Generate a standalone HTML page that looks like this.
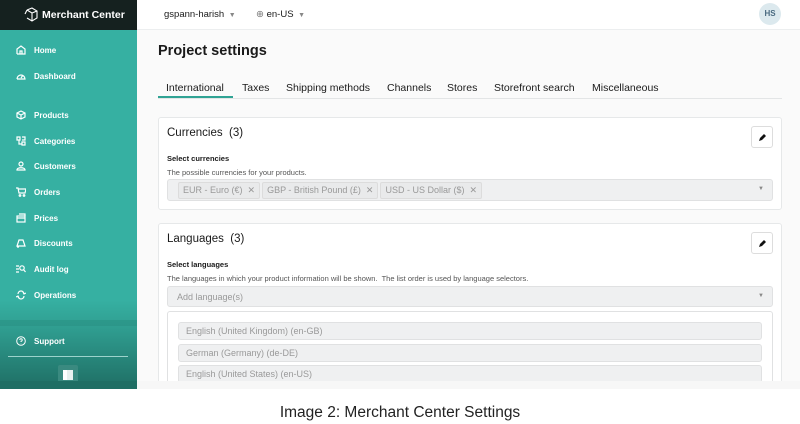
<!DOCTYPE html>
<html><head><meta charset="utf-8"><style>
*{margin:0;padding:0;box-sizing:border-box}
body{width:800px;height:424px;background:#fff;font-family:"Liberation Sans",sans-serif;position:relative;overflow:hidden;color:#1a1a1a}
.abs{position:absolute}
.side{left:0;top:0;width:137px;height:389px;background:linear-gradient(#36b0a2 0,#36b0a2 300px,#2f9c8f 330px,#1f6e64 389px)}
.topdark{left:0;top:0;width:137px;height:30px;background:#15211f;color:#fff;font-size:10.5px;font-weight:bold}
.nav{left:16px;color:#fff;font-size:8px;font-weight:bold;display:flex;align-items:center}
.nav svg{width:10px;height:10px;margin-right:8px}
.main{left:137px;top:0;width:663px;height:389px;background:#fafafa}
.top{left:137px;top:0;width:663px;height:30px;background:#fff;border-bottom:1px solid #eceeef;font-size:9.5px}
.card{left:158px;width:624px;background:#fff;border:1px solid #e6e8e9;border-radius:3px}
.tab{top:82px;font-size:10.5px;color:#1a1a1a}
.edit{width:22px;height:22px;border:1px solid #ddd;border-radius:3px;background:#fff}
.inp{background:#eff0f1;border:1px solid #e0e1e2;border-radius:3px;color:#999;font-size:9px}
.chip{background:#e9eaeb;border:1px solid #dcdcdc;border-radius:2px;height:17px;line-height:15px;padding:0 4px;color:#999;font-size:9px;display:inline-block;margin-right:2px}
</style></head><body>
<div class="abs main"></div>
<div class="abs side"></div>
<div class="abs topdark"><svg class="abs" style="left:24px;top:7px" width="14" height="15" viewBox="0 0 14 15" fill="none" stroke="#fff" stroke-width="1.1"><path d="M3 3L8 1l5 3v7l-5 3-5-3M3 3l5 3 5-2M8 6v8M1 7l2-4"/></svg><span class="abs" style="left:42px;top:9px">Merchant Center</span></div>
<div class="abs nav" style="top:45px"><svg viewBox="0 0 10 10" fill="none" stroke="#fff" stroke-width="1.2"><path d="M1 9V4l4-3 4 3v5H1M4 9V6h2v3"/></svg>Home</div>
<div class="abs nav" style="top:71px"><svg viewBox="0 0 10 10" fill="none" stroke="#fff" stroke-width="1.2"><path d="M1 8a4 4 0 1 1 8 0H1M5 7l2-3"/></svg>Dashboard</div>
<div class="abs nav" style="top:110px"><svg viewBox="0 0 10 10" fill="none" stroke="#fff" stroke-width="1.2"><path d="M5 1l4 2v4L5 9 1 7V3zM1 3l4 2 4-2M5 5v4"/></svg>Products</div>
<div class="abs nav" style="top:136px"><svg viewBox="0 0 10 10" fill="none" stroke="#fff" stroke-width="1.2"><path d="M1 1h3v3H1zM6 6h3v3H6zM3 4v4h3M6 1h3v3H6"/></svg>Categories</div>
<div class="abs nav" style="top:161px"><svg viewBox="0 0 10 10" fill="none" stroke="#fff" stroke-width="1.2"><circle cx="5" cy="3" r="2"/><path d="M1 9c0-3 8-3 8 0z"/></svg>Customers</div>
<div class="abs nav" style="top:187px"><svg viewBox="0 0 10 10" fill="none" stroke="#fff" stroke-width="1.2"><path d="M0 1h2l1 5h6l1-4H2.5"/><circle cx="4" cy="8.5" r=".8"/><circle cx="8" cy="8.5" r=".8"/></svg>Orders</div>
<div class="abs nav" style="top:213px"><svg viewBox="0 0 10 10" fill="none" stroke="#fff" stroke-width="1.2"><rect x="1" y="3" width="8" height="6"/><path d="M1 5h8M3 1h6v2"/></svg>Prices</div>
<div class="abs nav" style="top:238px"><svg viewBox="0 0 10 10" fill="none" stroke="#fff" stroke-width="1.2"><path d="M3 2h4l2 6H1zM1 9h2"/></svg>Discounts</div>
<div class="abs nav" style="top:264px"><svg viewBox="0 0 10 10" fill="none" stroke="#fff" stroke-width="1.2"><path d="M0 2h3M0 5h3M0 8h3"/><circle cx="6" cy="4" r="2.2"/><path d="M7.5 5.5L9.5 8"/></svg>Audit log</div>
<div class="abs nav" style="top:290px"><svg viewBox="0 0 10 10" fill="none" stroke="#fff" stroke-width="1.2"><path d="M2 4a3 3 0 0 1 6 0M8 6a3 3 0 0 1-6 0M7 2l1 2 2-1M3 8L2 6 0 7"/></svg>Operations</div>
<div class="abs" style="left:0;top:320px;width:137px;height:6px;background:#2a9184;opacity:.6"></div>
<div class="abs nav" style="top:336px"><svg viewBox="0 0 10 10" fill="none" stroke="#fff" stroke-width="1"><circle cx="5" cy="5" r="4.3"/><path d="M3.8 4a1.2 1.2 0 1 1 1.2 1.2V6M5 7.5v.3"/></svg>Support</div>
<div class="abs" style="left:8px;top:356px;width:120px;height:1px;background:#9dd3cc"></div>
<div class="abs" style="left:58px;top:365px;width:20px;height:20px;background:#3a8a80;border-radius:2px"><div class="abs" style="left:5px;top:5px;width:10px;height:10px;background:#e8f0ef;border-left:4px solid #fff"></div></div>

<div class="abs top"><span class="abs" style="left:27px;top:9px">gspann-harish <span style="color:#888;font-size:7px">&nbsp;▼</span></span>
<span class="abs" style="left:119px;top:9px"><span style="color:#777">⊕</span> en-US <span style="color:#888;font-size:7px">&nbsp;▼</span></span>
<div class="abs" style="left:622px;top:3px;width:22px;height:22px;border-radius:50%;background:#dce9ee;color:#4a6a80;font-size:8px;font-weight:bold;text-align:center;line-height:22px">HS</div></div>

<div class="abs" style="left:158px;top:43px;font-size:14.5px;font-weight:bold">Project settings</div>
<div class="abs" style="left:158px;top:98px;width:624px;height:1px;background:#e3e5e6"></div>
<div class="abs" style="left:158px;top:96px;width:75px;height:2px;background:#30a394"></div>
<span class="abs tab" style="left:166px">International</span>
<span class="abs tab" style="left:242px">Taxes</span>
<span class="abs tab" style="left:286px">Shipping methods</span>
<span class="abs tab" style="left:387px">Channels</span>
<span class="abs tab" style="left:447px">Stores</span>
<span class="abs tab" style="left:494px">Storefront search</span>
<span class="abs tab" style="left:592px">Miscellaneous</span>

<div class="abs card" style="top:117px;height:93px"></div>
<div class="abs" style="left:167px;top:127px;font-size:11.5px">Currencies&nbsp; (3)</div>
<div class="abs edit" style="left:751px;top:126px"><svg class="abs" style="left:6px;top:6px" width="9" height="9" viewBox="0 0 9 9"><path d="M1 8l1-3 4-4 2 2-4 4z" fill="#111"/></svg></div>
<div class="abs" style="left:167px;top:154px;font-size:7.5px;font-weight:bold">Select currencies</div>
<div class="abs" style="left:167px;top:168px;font-size:7.5px;color:#555">The possible currencies for your products.</div>
<div class="abs inp" style="left:167px;top:179px;width:606px;height:22px;padding:2px 0 0 10px"><span class="chip">EUR - Euro (€) &nbsp;✕</span><span class="chip">GBP - British Pound (£) &nbsp;✕</span><span class="chip">USD - US Dollar ($) &nbsp;✕</span><span class="abs" style="right:8px;top:6px;font-size:6px;color:#888">▼</span></div>

<div class="abs card" style="top:223px;height:170px"></div>
<div class="abs" style="left:167px;top:233px;font-size:11.5px">Languages&nbsp; (3)</div>
<div class="abs edit" style="left:751px;top:232px"><svg class="abs" style="left:6px;top:6px" width="9" height="9" viewBox="0 0 9 9"><path d="M1 8l1-3 4-4 2 2-4 4z" fill="#111"/></svg></div>
<div class="abs" style="left:167px;top:260px;font-size:7.5px;font-weight:bold">Select languages</div>
<div class="abs" style="left:167px;top:274px;font-size:7.5px;color:#555">The languages in which your product information will be shown.&nbsp; The list order is used by language selectors.</div>
<div class="abs inp" style="left:167px;top:286px;width:606px;height:21px;padding:5px 0 0 9px">Add language(s)<span class="abs" style="right:8px;top:6px;font-size:6px;color:#888">▼</span></div>
<div class="abs" style="left:167px;top:311px;width:606px;height:80px;border:1px solid #e0e1e2;border-radius:3px;background:#fff"></div>
<div class="abs inp" style="left:178px;top:322px;width:584px;height:18px;padding:3px 0 0 7px">English (United Kingdom) (en-GB)</div>
<div class="abs inp" style="left:178px;top:344px;width:584px;height:18px;padding:3px 0 0 7px">German (Germany) (de-DE)</div>
<div class="abs inp" style="left:178px;top:365px;width:584px;height:18px;padding:3px 0 0 7px">English (United States) (en-US)</div>

<div class="abs" style="left:0;top:381px;width:800px;height:43px;background:#fff"></div>
<div class="abs" style="left:137px;top:381px;width:663px;height:8px;background:#f7f7f7"></div>
<div class="abs" style="left:0;top:381px;width:137px;height:8px;background:#1f6e64"></div>
<div class="abs" style="left:0;top:404px;width:800px;text-align:center;font-size:15.5px;color:#222">Image 2: Merchant Center Settings</div>
</body></html>
